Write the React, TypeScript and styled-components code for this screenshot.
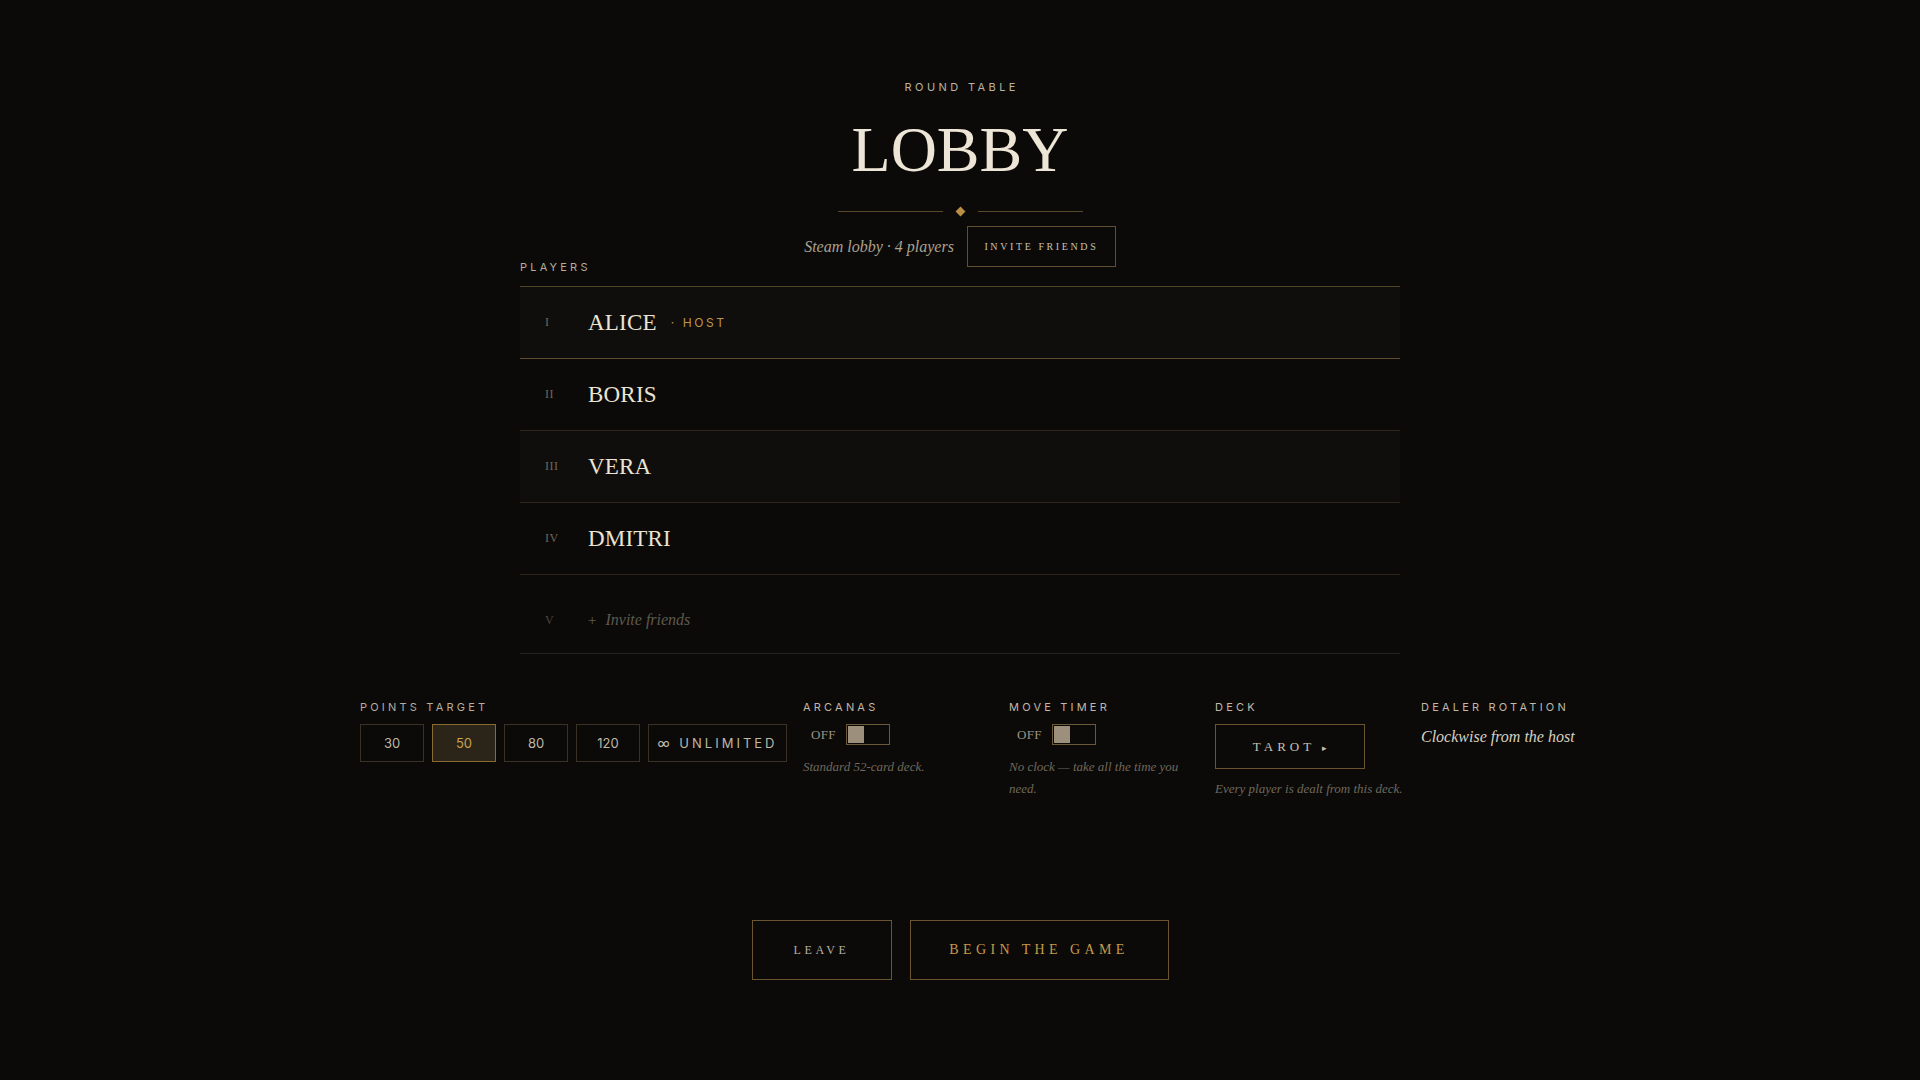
import React from "react";
import styled, { createGlobalStyle } from "styled-components";

const GlobalStyle = createGlobalStyle`
  html, body { margin: 0; padding: 0; background: #0b0a08; }
  body { font-family: "Liberation Serif", "Times New Roman", serif; }
  * { box-sizing: border-box; }
`;

const SERIF = `"Liberation Serif", "Times New Roman", serif`;
const SANS = `Inter, "Liberation Sans", Arial, sans-serif`;

const Page = styled.main`
  min-height: 1080px;
  display: flex;
  flex-direction: column;
  align-items: center;
  padding-top: 79px;
  background: #0b0a08;
  overflow: hidden;
`;

const Eyebrow = styled.div`
  font-family: ${SANS};
  font-size: 11px;
  line-height: 16px;
  letter-spacing: 3.4px;
  color: #bab2a2;
  text-transform: uppercase;
  padding-left: 3.4px;
`;

const Title = styled.h1`
  margin: 22px 0 0;
  font-family: ${SERIF};
  font-weight: 400;
  font-size: 64px;
  line-height: 66px;
  letter-spacing: 0;
  color: #ede5d5;
`;

const Divider = styled.div`
  margin-top: 23px;
  display: flex;
  align-items: center;
  gap: 10px;
  height: 10px;
`;

const Rule = styled.span`
  display: block;
  width: 105px;
  height: 1px;
  background: #5a4a2c;
`;

const Diamond = styled.span`
  display: block;
  width: 7px;
  height: 7px;
  margin: 0 4px;
  background: #b98e45;
  transform: rotate(45deg);
`;

const SubRow = styled.div`
  margin-top: 10px;
  display: flex;
  align-items: center;
  gap: 13px;
`;

const SubText = styled.span`
  font-family: ${SERIF};
  font-style: italic;
  font-size: 16px;
  color: #aaa292;
`;

const OutlineButton = styled.button`
  height: 41px;
  width: 149px;
  padding: 0;
  background: transparent;
  border: 1px solid #5e5031;
  font-family: ${SERIF};
  font-size: 10px;
  letter-spacing: 2.6px;
  color: #c8c0b0;
  text-transform: uppercase;
  cursor: pointer;
`;

const PlayersSection = styled.section`
  width: 880px;
  margin-top: -7px;
`;

const SectionLabel = styled.div`
  font-family: ${SANS};
  font-size: 11px;
  line-height: 14px;
  letter-spacing: 3.2px;
  color: #b5ad9d;
  text-transform: uppercase;
`;

const Table = styled.div`
  margin-top: 12px;
  border-top: 1px solid #4f4628;
`;

const Row = styled.div<{ $shade: boolean; $line: string; $tall?: boolean }>`
  display: flex;
  align-items: center;
  height: ${(p) => (p.$tall ? 79 : 72)}px;
  padding: ${(p) => (p.$tall ? "12px 0 0 0" : "0")};
  background: ${(p) => (p.$shade ? "#0f0e0c" : "#0b0a08")};
  border-bottom: 1px solid ${(p) => p.$line};
`;

const Numeral = styled.span<{ $dim?: boolean }>`
  width: 68px;
  padding-left: 25px;
  font-family: ${SERIF};
  font-size: 12px;
  letter-spacing: 0.5px;
  color: ${(p) => (p.$dim ? "#4a463e" : "#6e675b")};
`;

const Name = styled.span`
  font-family: ${SERIF};
  font-size: 23px;
  color: #ebe3d3;
  letter-spacing: 0.2px;
`;

const HostTag = styled.span`
  margin-left: 14px;
  font-family: ${SANS};
  font-size: 12px;
  letter-spacing: 2.6px;
  color: #c0954a;
`;

const InviteSlot = styled.span`
  font-family: ${SERIF};
  font-size: 15px;
  color: #5f594e;
  display: flex;
  align-items: baseline;
  gap: 9px;
`;

const InviteItalic = styled.span`
  font-style: italic;
  font-size: 16px;
`;

const Settings = styled.section`
  width: 1200px;
  margin-top: 46px;
  display: flex;
  gap: 16px;
  flex-wrap: nowrap;
`;

const SettingBlock = styled.div<{ $w?: number }>`
  flex: 0 0 ${(p) => (p.$w ? `${p.$w}px` : "auto")};
  display: flex;
  flex-direction: column;
`;

const SettingLabel = styled(SectionLabel)<{ $tone?: string }>`
  color: ${(p) => p.$tone ?? "#c0b8a8"};
`;

const ChipRow = styled.div`
  margin-top: 10px;
  display: flex;
  gap: 8px;
`;

const Chip = styled.button<{ $active?: boolean; $wide?: boolean }>`
  height: 38px;
  width: ${(p) => (p.$wide ? "139px" : "64px")};
  background: ${(p) => (p.$active ? "#2b2418" : "transparent")};
  border: 1px solid ${(p) => (p.$active ? "#8a6a30" : "#3a3224")};
  font-family: ${SANS};
  font-size: 13px;
  letter-spacing: ${(p) => (p.$wide ? "3px" : "0")};
  color: ${(p) => (p.$active ? "#c9a24e" : "#bfb7a7")};
  padding: 0;
  cursor: pointer;
`;

const ToggleRow = styled.div`
  margin-top: 10px;
  display: flex;
  align-items: center;
  gap: 10px;
  padding-left: 8px;
`;

const OffText = styled.span`
  font-family: ${SERIF};
  font-size: 13px;
  color: #9a9282;
  letter-spacing: 0.3px;
`;

const Toggle = styled.span`
  display: flex;
  align-items: center;
  width: 44px;
  height: 21px;
  padding: 1px;
  border: 1px solid #6a5a3a;
`;

const Knob = styled.span`
  display: block;
  width: 16px;
  height: 17px;
  background: #9c907c;
`;

const Desc = styled.p<{ $gap?: number }>`
  margin: ${(p) => p.$gap ?? 11}px 0 0;
  font-family: ${SERIF};
  font-style: italic;
  font-size: 13px;
  line-height: 22px;
  color: #6f685c;
`;

const Select = styled.button`
  margin-top: 10px;
  width: 150px;
  height: 45px;
  background: transparent;
  border: 1px solid #6b5530;
  font-family: ${SERIF};
  font-size: 13px;
  letter-spacing: 4px;
  color: #c8c0b0;
  cursor: pointer;
`;

const Arrow = styled.span`
  font-size: 9px;
  letter-spacing: 0;
`;

const RotationValue = styled.div`
  margin-top: 14px;
  font-family: ${SERIF};
  font-style: italic;
  font-size: 16px;
  color: #d8d0c0;
  white-space: nowrap;
`;

const Actions = styled.div`
  margin-top: 120px;
  display: flex;
  gap: 18px;
`;

const ActionButton = styled.button<{ $primary?: boolean }>`
  height: 60px;
  width: ${(p) => (p.$primary ? "259px" : "140px")};
  background: transparent;
  border: 1px solid #6b5530;
  font-family: ${SERIF};
  font-size: ${(p) => (p.$primary ? "14px" : "12px")};
  letter-spacing: ${(p) => (p.$primary ? "4.4px" : "3.6px")};
  color: ${(p) => (p.$primary ? "#c49a4a" : "#b8b0a0")};
  cursor: pointer;
  padding: 0;
`;

const players = [
  { num: "I", name: "ALICE", host: true, line: "#5c4c32" },
  { num: "II", name: "BORIS", host: false, line: "#2f2719" },
  { num: "III", name: "VERA", host: false, line: "#2e2619" },
  { num: "IV", name: "DMITRI", host: false, line: "#2a2419" },
];

export default function App() {
  return (
    <>
      <GlobalStyle />
      <Page>
        <Eyebrow>Round Table</Eyebrow>
        <Title>LOBBY</Title>
        <Divider>
          <Rule />
          <Diamond />
          <Rule />
        </Divider>
        <SubRow>
          <SubText>Steam lobby · 4 players</SubText>
          <OutlineButton>Invite Friends</OutlineButton>
        </SubRow>

        <PlayersSection>
          <SectionLabel>Players</SectionLabel>
          <Table>
            {players.map((p, i) => (
              <Row key={p.num} $shade={i % 2 === 0} $line={p.line}>
                <Numeral>{p.num}</Numeral>
                <Name>{p.name}</Name>
                {p.host && <HostTag>· HOST</HostTag>}
              </Row>
            ))}
            <Row $shade={false} $line="#24221c" $tall>
              <Numeral $dim>V</Numeral>
              <InviteSlot>
                <span>+</span>
                <InviteItalic>Invite friends</InviteItalic>
              </InviteSlot>
            </Row>
          </Table>
        </PlayersSection>

        <Settings>
          <SettingBlock>
            <SettingLabel $tone="#b5ad9d">Points Target</SettingLabel>
            <ChipRow>
              <Chip>30</Chip>
              <Chip $active>50</Chip>
              <Chip>80</Chip>
              <Chip>120</Chip>
              <Chip $wide>∞ UNLIMITED</Chip>
            </ChipRow>
          </SettingBlock>

          <SettingBlock $w={190}>
            <SettingLabel>Arcanas</SettingLabel>
            <ToggleRow>
              <OffText>OFF</OffText>
              <Toggle>
                <Knob />
              </Toggle>
            </ToggleRow>
            <Desc>Standard 52-card deck.</Desc>
          </SettingBlock>

          <SettingBlock $w={190}>
            <SettingLabel>Move Timer</SettingLabel>
            <ToggleRow>
              <OffText>OFF</OffText>
              <Toggle>
                <Knob />
              </Toggle>
            </ToggleRow>
            <Desc>No clock — take all the time you need.</Desc>
          </SettingBlock>

          <SettingBlock $w={190}>
            <SettingLabel>Deck</SettingLabel>
            <Select>
              TAROT <Arrow>▸</Arrow>
            </Select>
            <Desc $gap={9}>Every player is dealt from this deck.</Desc>
          </SettingBlock>

          <SettingBlock $w={190}>
            <SettingLabel>Dealer Rotation</SettingLabel>
            <RotationValue>Clockwise from the host</RotationValue>
          </SettingBlock>
        </Settings>

        <Actions>
          <ActionButton>LEAVE</ActionButton>
          <ActionButton $primary>BEGIN THE GAME</ActionButton>
        </Actions>
      </Page>
    </>
  );
}
